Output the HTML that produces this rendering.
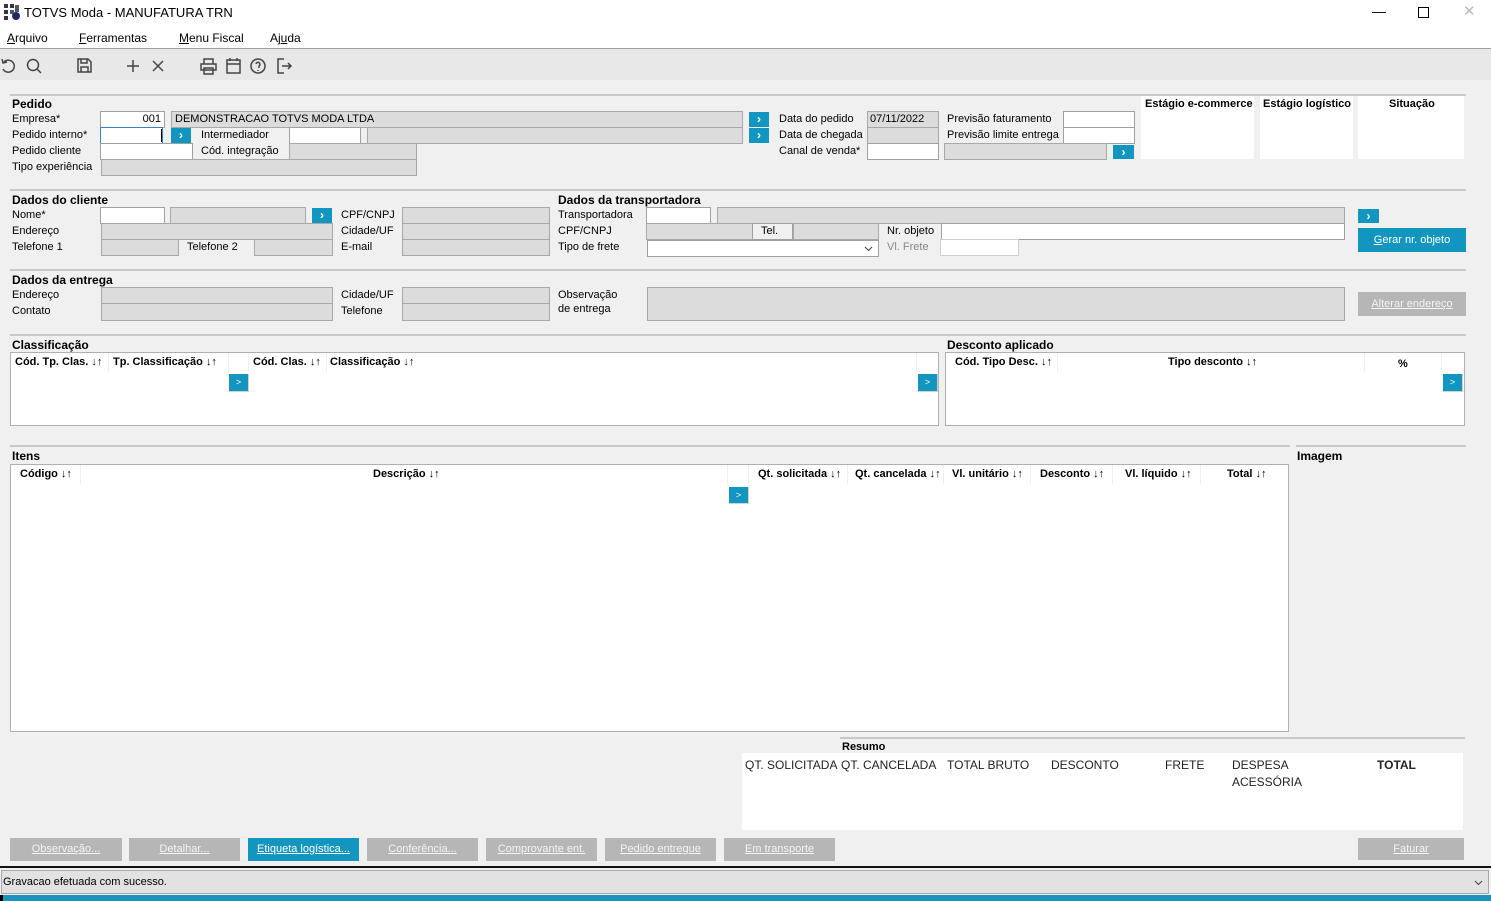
<!DOCTYPE html>
<html><head><meta charset="utf-8"><style>
*{box-sizing:border-box;margin:0;padding:0}
body{width:1491px;height:901px;background:#f0f0f0;font-family:"Liberation Sans",sans-serif;font-size:11px;color:#000;position:relative;overflow:hidden}
.a{position:absolute}
.t{position:absolute;white-space:nowrap;line-height:14px}
.b{font-weight:bold}
.w{position:absolute;background:#fff;border:1px solid #a0a0a0}
.g{position:absolute;background:#dcdcdc;border:1px solid #a8a8a8}
.ln{position:absolute;height:2px;background:#c8c8c8}
.bb{position:absolute;background:#1296bf;color:#fff;font-weight:bold;font-size:12px;text-align:center;line-height:14px}
.sb{position:absolute;background:#1296bf;color:#fff;font-size:9px;text-align:center;line-height:17px;border-right:1px solid #d0d0d0;border-bottom:1px solid #d0d0d0}
.btn{position:absolute;background:#b6b6b6;color:#f4f4f4;text-decoration:underline;text-align:center;font-size:11px;line-height:23px;height:23px}
.tb{position:absolute;background:#fff;border:1px solid #b0b0b0}
.h{position:absolute;font-weight:bold;white-space:nowrap;line-height:14px}
.sep{position:absolute;width:1px;background:#f0f0f0}
</style></head><body>
<div class="a" style="left:0;top:0;width:1491px;height:48px;background:#fff"></div>
<svg class="a" style="left:4px;top:4px" width="16" height="16"><rect x="0" y="0" width="4" height="4" fill="#334"/><rect x="6" y="0" width="4" height="4" fill="#334"/><rect x="0" y="6" width="4" height="4" fill="#334"/><rect x="6" y="6" width="4" height="4" fill="#556"/><rect x="0" y="12" width="4" height="4" fill="#334"/><circle cx="12" cy="12" r="4" fill="#1a2a6a"/><rect x="11" y="1" width="4" height="7" fill="#556"/></svg>
<div class="t" style="left:24px;top:6px;font-size:13px">TOTVS Moda - MANUFATURA TRN</div>
<div class="t" style="left:1372px;top:4px;font-size:14px">&#8212;</div>
<div class="a" style="left:1418px;top:7px;width:11px;height:11px;border:1px solid #000"></div>
<div class="t" style="left:1463px;top:5px;font-size:15px;color:#bbb">&#10005;</div>
<div class="t" style="left:7px;top:31px;font-size:12px"><u>A</u>rquivo</div>
<div class="t" style="left:79px;top:31px;font-size:12px"><u>F</u>erramentas</div>
<div class="t" style="left:179px;top:31px;font-size:12px"><u>M</u>enu Fiscal</div>
<div class="t" style="left:270px;top:31px;font-size:12px">Aj<u>u</u>da</div>
<div class="a" style="left:0;top:48px;width:1491px;height:1px;background:#a0a0a0"></div>
<div class="a" style="left:0;top:49px;width:1491px;height:31px;background:#e8e8e8"></div>
<svg class="a" style="left:0;top:56px" width="300" height="20" fill="none" stroke="#444" stroke-width="1.5">
<path d="M4 6 A6 6 0 1 1 3 13 M2 3 L3 7 L7 6"/>
<circle cx="33" cy="9" r="5.5"/><path d="M37 13 L41 17"/>
<path d="M78 3 H88 L91 6 V16 H78 Z M81 3 V7 H87 V3 M81 16 V11 H88 V16"/>
<path d="M133 4 V16 M127 10 H139"/>
<path d="M153 5 L163 15 M163 5 L153 15"/>
<path d="M204 8 V3 H213 V8 M201 8 H216 V14 H201 Z M204 12 H213 V18 H204 Z"/>
<path d="M227 4 H240 V17 H227 Z M227 8 H240 M230 2 V5 M237 2 V5"/>
<circle cx="258" cy="10" r="7"/><path d="M256 8 A2 2 0 1 1 259 10 V12 M258 14 V15"/>
<path d="M284 3 H278 V17 H284 M282 10 H291 M288 7 L291 10 L288 13"/>
</svg>
<div class="ln" style="left:10px;top:94px;width:1456px"></div>
<div class="ln" style="left:10px;top:189px;width:1456px"></div>
<div class="ln" style="left:10px;top:269px;width:1456px"></div>
<div class="ln" style="left:10px;top:334px;width:1456px"></div>
<div class="ln" style="left:10px;top:445px;width:1280px"></div>
<div class="ln" style="left:1296px;top:445px;width:170px"></div>
<div class="ln" style="left:840px;top:737px;width:625px"></div>
<div class="h" style="left:12px;top:97px;font-size:12px">Pedido</div>
<div class="t" style="left:12px;top:112px">Empresa*</div>
<div class="t" style="left:12px;top:128px">Pedido interno*</div>
<div class="t" style="left:12px;top:144px">Pedido cliente</div>
<div class="t" style="left:12px;top:160px">Tipo experiência</div>
<div class="w" style="left:100px;top:111px;width:65px;height:17px;text-align:right;padding-right:3px;line-height:15px">001</div>
<div class="g" style="left:171px;top:111px;width:572px;height:17px;padding-left:3px;line-height:15px">DEMONSTRACAO TOTVS MODA LTDA</div>
<div class="bb" style="left:749px;top:112px;width:20px;height:15px">&#8250;</div>
<div class="w" style="left:100px;top:127px;width:63px;height:17px;border-color:#3b7fc4"></div>
<div class="a" style="left:161px;top:129px;width:1px;height:13px;background:#000"></div>
<div class="bb" style="left:171px;top:128px;width:20px;height:15px">&#8250;</div>
<div class="t" style="left:201px;top:128px">Intermediador</div>
<div class="w" style="left:289px;top:127px;width:72px;height:17px"></div>
<div class="g" style="left:367px;top:127px;width:376px;height:17px"></div>
<div class="bb" style="left:749px;top:128px;width:20px;height:15px">&#8250;</div>
<div class="w" style="left:100px;top:143px;width:93px;height:17px"></div>
<div class="t" style="left:201px;top:144px">Cód. integração</div>
<div class="g" style="left:289px;top:143px;width:128px;height:17px"></div>
<div class="g" style="left:101px;top:159px;width:316px;height:17px"></div>
<div class="t" style="left:779px;top:112px">Data do pedido</div>
<div class="t" style="left:779px;top:128px">Data de chegada</div>
<div class="t" style="left:779px;top:144px">Canal de venda*</div>
<div class="g" style="left:867px;top:111px;width:72px;height:17px;padding-left:2px;line-height:15px">07/11/2022</div>
<div class="g" style="left:867px;top:127px;width:72px;height:17px"></div>
<div class="w" style="left:867px;top:143px;width:72px;height:17px"></div>
<div class="t" style="left:947px;top:112px">Previsão faturamento</div>
<div class="t" style="left:947px;top:128px">Previsão limite entrega</div>
<div class="w" style="left:1063px;top:111px;width:72px;height:17px"></div>
<div class="w" style="left:1063px;top:127px;width:72px;height:17px"></div>
<div class="g" style="left:944px;top:143px;width:163px;height:17px"></div>
<div class="bb" style="left:1113px;top:145px;width:21px;height:14px">&#8250;</div>
<div class="a" style="left:1141px;top:96px;width:113px;height:63px;background:#fff"></div>
<div class="a" style="left:1260px;top:96px;width:93px;height:63px;background:#fff"></div>
<div class="a" style="left:1358px;top:96px;width:106px;height:63px;background:#fff"></div>
<div class="h" style="left:1145px;top:97px">Estágio e-commerce</div>
<div class="h" style="left:1263px;top:97px">Estágio logístico</div>
<div class="h" style="left:1389px;top:97px">Situação</div>
<div class="h" style="left:12px;top:193px;font-size:12px">Dados do cliente</div>
<div class="t" style="left:12px;top:208px">Nome*</div>
<div class="t" style="left:12px;top:224px">Endereço</div>
<div class="t" style="left:12px;top:240px">Telefone 1</div>
<div class="w" style="left:100px;top:207px;width:65px;height:17px"></div>
<div class="g" style="left:170px;top:207px;width:136px;height:17px"></div>
<div class="bb" style="left:312px;top:208px;width:20px;height:16px">&#8250;</div>
<div class="g" style="left:101px;top:223px;width:232px;height:17px"></div>
<div class="g" style="left:101px;top:239px;width:78px;height:17px"></div>
<div class="t" style="left:187px;top:240px">Telefone 2</div>
<div class="g" style="left:254px;top:239px;width:79px;height:17px"></div>
<div class="t" style="left:341px;top:208px">CPF/CNPJ</div>
<div class="t" style="left:341px;top:224px">Cidade/UF</div>
<div class="t" style="left:341px;top:240px">E-mail</div>
<div class="g" style="left:402px;top:207px;width:148px;height:17px"></div>
<div class="g" style="left:402px;top:223px;width:148px;height:17px"></div>
<div class="g" style="left:402px;top:239px;width:148px;height:17px"></div>
<div class="h" style="left:558px;top:193px;font-size:12px">Dados da transportadora</div>
<div class="t" style="left:558px;top:208px">Transportadora</div>
<div class="t" style="left:558px;top:224px">CPF/CNPJ</div>
<div class="t" style="left:558px;top:240px">Tipo de frete</div>
<div class="w" style="left:646px;top:207px;width:65px;height:17px"></div>
<div class="g" style="left:717px;top:207px;width:628px;height:17px"></div>
<div class="bb" style="left:1358px;top:209px;width:21px;height:14px">&#8250;</div>
<div class="g" style="left:646px;top:223px;width:107px;height:17px"></div>
<div class="w" style="left:752px;top:223px;width:41px;height:17px;background:#f0f0f0;padding-left:8px;line-height:15px">Tel.</div>
<div class="g" style="left:793px;top:223px;width:86px;height:17px"></div>
<div class="t" style="left:887px;top:224px">Nr. objeto</div>
<div class="w" style="left:941px;top:223px;width:404px;height:17px"></div>
<div class="w" style="left:647px;top:240px;width:232px;height:17px"></div>
<svg class="a" style="left:864px;top:246px" width="9" height="6" fill="none" stroke="#444"><path d="M1 1 L4.5 4.5 L8 1"/></svg>
<div class="t" style="left:887px;top:240px;color:#888">Vl. Frete</div>
<div class="w" style="left:940px;top:239px;width:79px;height:17px;border-color:#d0d0d0"></div>
<div class="a" style="left:1358px;top:228px;width:108px;height:24px;background:#1296bf;color:#fff;text-align:center;line-height:24px"><u>G</u>erar nr. objeto</div>
<div class="h" style="left:12px;top:273px;font-size:12px">Dados da entrega</div>
<div class="t" style="left:12px;top:288px">Endereço</div>
<div class="t" style="left:12px;top:304px">Contato</div>
<div class="g" style="left:101px;top:287px;width:232px;height:17px"></div>
<div class="g" style="left:101px;top:303px;width:232px;height:18px"></div>
<div class="t" style="left:341px;top:288px">Cidade/UF</div>
<div class="t" style="left:341px;top:304px">Telefone</div>
<div class="g" style="left:402px;top:287px;width:148px;height:17px"></div>
<div class="g" style="left:402px;top:303px;width:148px;height:18px"></div>
<div class="t" style="left:558px;top:288px">Observação</div>
<div class="t" style="left:558px;top:302px">de entrega</div>
<div class="g" style="left:647px;top:287px;width:698px;height:34px"></div>
<div class="btn" style="left:1358px;top:292px;width:108px;height:24px;line-height:24px">Alterar endereço</div>
<div class="h" style="left:12px;top:338px;font-size:12px">Classificação</div>
<div class="tb" style="left:10px;top:352px;width:929px;height:74px"></div>
<div class="sep" style="left:108px;top:353px;height:19px"></div>
<div class="sep" style="left:228px;top:353px;height:19px"></div>
<div class="sep" style="left:248px;top:353px;height:19px"></div>
<div class="sep" style="left:326px;top:353px;height:19px"></div>
<div class="sep" style="left:916px;top:353px;height:19px"></div>
<div class="h" style="left:15px;top:355px">Cód. Tp. Clas. ↓↑</div>
<div class="h" style="left:113px;top:355px">Tp. Classificação ↓↑</div>
<div class="h" style="left:253px;top:355px">Cód. Clas. ↓↑</div>
<div class="h" style="left:330px;top:355px">Classificação ↓↑</div>
<div class="sb" style="left:229px;top:374px;width:20px;height:18px">&gt;</div>
<div class="sb" style="left:918px;top:374px;width:20px;height:18px">&gt;</div>
<div class="h" style="left:947px;top:338px;font-size:12px">Desconto aplicado</div>
<div class="tb" style="left:945px;top:352px;width:520px;height:74px"></div>
<div class="sep" style="left:1057px;top:353px;height:19px"></div>
<div class="sep" style="left:1364px;top:353px;height:19px"></div>
<div class="sep" style="left:1441px;top:353px;height:19px"></div>
<div class="h" style="left:955px;top:355px">Cód. Tipo Desc. ↓↑</div>
<div class="h" style="left:1168px;top:355px">Tipo desconto ↓↑</div>
<div class="h" style="left:1398px;top:357px">%</div>
<div class="sb" style="left:1443px;top:374px;width:20px;height:18px">&gt;</div>
<div class="h" style="left:12px;top:449px;font-size:12px">Itens</div>
<div class="h" style="left:1297px;top:449px;font-size:12px">Imagem</div>
<div class="tb" style="left:10px;top:464px;width:1279px;height:268px"></div>
<div class="sep" style="left:80px;top:465px;height:19px"></div>
<div class="sep" style="left:727px;top:465px;height:19px"></div>
<div class="sep" style="left:748px;top:465px;height:19px"></div>
<div class="sep" style="left:847px;top:465px;height:19px"></div>
<div class="sep" style="left:943px;top:465px;height:19px"></div>
<div class="sep" style="left:1030px;top:465px;height:19px"></div>
<div class="sep" style="left:1112px;top:465px;height:19px"></div>
<div class="sep" style="left:1200px;top:465px;height:19px"></div>
<div class="h" style="left:20px;top:467px">Código ↓↑</div>
<div class="h" style="left:373px;top:467px">Descrição ↓↑</div>
<div class="h" style="left:758px;top:467px">Qt. solicitada ↓↑</div>
<div class="h" style="left:855px;top:467px">Qt. cancelada ↓↑</div>
<div class="h" style="left:952px;top:467px">Vl. unitário ↓↑</div>
<div class="h" style="left:1040px;top:467px">Desconto ↓↑</div>
<div class="h" style="left:1125px;top:467px">Vl. líquido ↓↑</div>
<div class="h" style="left:1227px;top:467px">Total ↓↑</div>
<div class="sb" style="left:729px;top:487px;width:20px;height:17px">&gt;</div>
<div class="h" style="left:842px;top:740px">Resumo</div>
<div class="a" style="left:742px;top:753px;width:721px;height:77px;background:#fff"></div>
<div class="t" style="left:745px;top:758px;font-size:12px;color:#222">QT. SOLICITADA</div>
<div class="t" style="left:841px;top:758px;font-size:12px;color:#222">QT. CANCELADA</div>
<div class="t" style="left:947px;top:758px;font-size:12px;color:#222">TOTAL BRUTO</div>
<div class="t" style="left:1051px;top:758px;font-size:12px;color:#222">DESCONTO</div>
<div class="t" style="left:1165px;top:758px;font-size:12px;color:#222">FRETE</div>
<div class="t" style="left:1232px;top:758px;font-size:12px;color:#222">DESPESA</div>
<div class="t" style="left:1232px;top:775px;font-size:12px;color:#222">ACESSÓRIA</div>
<div class="t b" style="left:1377px;top:758px;font-size:12px;color:#222">TOTAL</div>
<div class="btn" style="left:10px;top:838px;width:112px">Observação...</div>
<div class="btn" style="left:129px;top:838px;width:111px">Detalhar...</div>
<div class="btn" style="left:248px;top:838px;width:111px;background:#1296bf;color:#fff">Etiqueta logística...</div>
<div class="btn" style="left:367px;top:838px;width:111px">Conferência...</div>
<div class="btn" style="left:486px;top:838px;width:111px">Comprovante ent.</div>
<div class="btn" style="left:605px;top:838px;width:111px">Pedido entregue</div>
<div class="btn" style="left:724px;top:838px;width:111px">Em transporte</div>
<div class="btn" style="left:1358px;top:838px;width:106px;height:22px;line-height:22px">Faturar</div>
<div class="a" style="left:0;top:866px;width:1491px;height:2px;background:#111"></div>
<div class="a" style="left:1px;top:870px;width:1488px;height:24px;background:#e2e2e2;border:1px solid #a8a8a8"></div>
<div class="t" style="left:3px;top:875px">Gravacao efetuada com sucesso.</div>
<svg class="a" style="left:1474px;top:880px" width="9" height="6" fill="none" stroke="#444"><path d="M1 1 L4.5 4.5 L8 1"/></svg>
<div class="a" style="left:0;top:895px;width:1491px;height:6px;background:#1a93bd"></div>
<div class="a" style="left:0;top:895px;width:3px;height:6px;background:#000"></div>
</body></html>
